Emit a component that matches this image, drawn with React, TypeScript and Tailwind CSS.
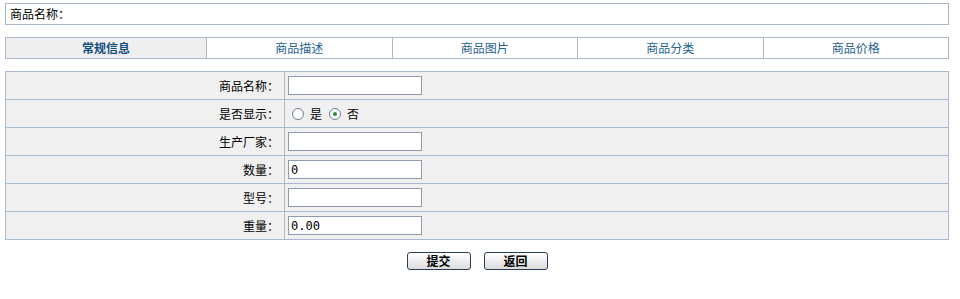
const font = { fontFamily: '"Noto Sans CJK SC", "Noto Sans", sans-serif' };

const tabs = ["常规信息", "商品描述", "商品图片", "商品分类", "商品价格"];

const rows: { label: string; kind: "text" | "radio"; value?: string }[] = [
  { label: "商品名称：", kind: "text", value: "" },
  { label: "是否显示：", kind: "radio" },
  { label: "生产厂家：", kind: "text", value: "" },
  { label: "数量：", kind: "text", value: "0" },
  { label: "型号：", kind: "text", value: "" },
  { label: "重量：", kind: "text", value: "0.00" },
];

function Radio({ checked }: { checked?: boolean }) {
  return (
    <span className="inline-flex w-[12px] h-[12px] rounded-full border border-[#6d7f93] bg-white items-center justify-center">
      {checked && <span className="w-[4px] h-[4px] rounded-full bg-[#2f8a3a]" />}
    </span>
  );
}

export default function App() {
  return (
    <div className="w-[960px] h-[299px] bg-white text-[12px] text-black overflow-hidden" style={font}>
      <div className="pt-[3px] pl-[5px] w-[949px]">
        <div className="h-[22px] border border-[#a9b7c8] flex items-center pl-[4px] leading-none">
          商品名称：
        </div>

        <div className="mt-[12px] h-[22px] border border-[#a9b7c8] flex">
          {tabs.map((t, i) => (
            <div
              key={t}
              className={`flex items-center justify-center leading-none ${
                i === 0
                  ? "w-[200px] bg-[#efefef] font-bold text-[#0f4d7d]"
                  : "flex-1 border-l border-[#a9b7c8] text-[#24628f]"
              }`}
            >
              {t}
            </div>
          ))}
        </div>

        <div className="mt-[12px] border border-[#a9b9ce] border-b-0 bg-[#f0f0f0]">
          {rows.map((r) => (
            <div key={r.label} className="flex h-[28px] border-b border-[#a9b9ce]">
              <div className="w-[278px] flex items-center justify-end pr-[5px] leading-none">
                {r.label}
              </div>
              <div className="flex-1 border-l border-[#a9b9ce] flex items-center pl-[3px]">
                {r.kind === "text" ? (
                  <div
                    className="w-[134px] h-[19px] bg-white border border-[#8f9bab] flex items-center pl-[2px] leading-none text-[12px]"
                    style={{ fontFamily: '"DejaVu Sans Mono", "Liberation Mono", monospace' }}
                  >
                    {r.value}
                  </div>
                ) : (
                  <div className="flex items-center leading-none pl-[4px]">
                    <Radio />
                    <span className="ml-[6px]">是</span>
                    <span className="ml-[7px] flex"><Radio checked /></span>
                    <span className="ml-[6px]">否</span>
                  </div>
                )}
              </div>
            </div>
          ))}
        </div>

        <div className="mt-[12px] flex justify-center gap-[13px]">
          {["提交", "返回"].map((b) => (
            <button
              key={b}
              className="w-[64px] h-[18px] rounded-[3px] border border-[#2c3e57] bg-gradient-to-b from-white to-[#dcdcdc] font-bold text-[12px] leading-none flex items-center justify-center"
              style={font}
            >
              {b}
            </button>
          ))}
        </div>
      </div>
    </div>
  );
}
